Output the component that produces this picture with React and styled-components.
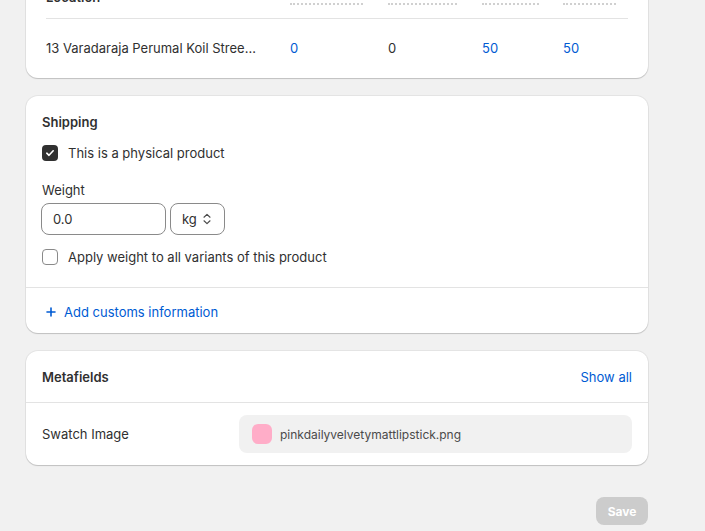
import React from "react";
import styled, { createGlobalStyle } from "styled-components";

const GlobalStyle = createGlobalStyle`
  html, body {
    margin: 0;
    padding: 0;
    background: #f1f1f1;
    font-family: Inter, "Noto Sans", sans-serif;
    font-size: 13px;
    color: #303030;
    overflow: hidden;
  }
`;

const Page = styled.div`
  width: 622px;
  padding-left: 26px;
  display: flex;
  flex-direction: column;
  gap: 18px;
`;

const Card = styled.section`
  background: #fff;
  border-radius: 12px;
  box-shadow: 0 0 0 1px rgba(0, 0, 0, 0.05), 0 1px 1px 0 rgba(0, 0, 0, 0.16);
  overflow: hidden;
`;

const InventoryCard = styled(Card)`
  margin-top: -32px;
  padding: 20px 20px 20px;
`;

const TableRow = styled.div`
  display: grid;
  grid-template-columns: 244px 98px 94px 81px 1fr;
  align-items: end;
  line-height: 20px;
  ${(p) =>
    p.$head
      ? `padding-bottom: 13px; border-bottom: 1px solid #e3e3e3; line-height: 15px;`
      : `padding-top: 19px;`}
`;

const HeadLabel = styled.span`
  justify-self: start;
  font-weight: 600;
  color: #303030;
  border-bottom: ${(p) => (p.$plain ? "none" : "2px dotted #d0d0d0")};
`;

const LocationText = styled.span`
  display: block;
  width: 214px;
  white-space: nowrap;
  overflow: hidden;
  text-overflow: ellipsis;
`;

const Qty = styled.span`
  color: ${(p) => (p.$link ? "#005bd3" : "#303030")};
`;

const Section = styled.div`
  padding: ${(p) => p.$pad || "16px"};
  border-top: ${(p) => (p.$divided ? "1px solid #e3e3e3" : "none")};
`;

const Title = styled.h2`
  margin: 0;
  font-size: 13px;
  line-height: 20px;
  font-weight: 600;
  color: #303030;
`;

const CheckRow = styled.label`
  display: flex;
  align-items: center;
  gap: 10px;
  line-height: 20px;
  margin-top: ${(p) => p.$mt || "0"};
`;

const Box = styled.span`
  width: 16px;
  height: 16px;
  box-sizing: border-box;
  border-radius: 4px;
  display: flex;
  align-items: center;
  justify-content: center;
  background: ${(p) => (p.$checked ? "#303030" : "#fff")};
  border: ${(p) => (p.$checked ? "none" : "1px solid #8a8a8a")};
`;

const FieldLabel = styled.div`
  margin-top: 17px;
  line-height: 20px;
`;

const FieldRow = styled.div`
  display: flex;
  gap: 4px;
  margin-top: 3px;
  margin-left: -1px;
`;

const Input = styled.div`
  box-sizing: border-box;
  height: 32px;
  width: ${(p) => p.$w};
  border: 1px solid #8a8a8a;
  border-radius: 8px;
  padding: 0 11px;
  display: flex;
  align-items: center;
  gap: 4px;
  color: #303030;
`;

const LinkButton = styled.div`
  display: flex;
  align-items: center;
  gap: 4px;
  color: #005bd3;
  line-height: 20px;
`;

const HeaderRow = styled.div`
  display: flex;
  justify-content: space-between;
  align-items: center;
  line-height: 20px;
`;

const Link = styled.span`
  color: #005bd3;
`;

const MetaRow = styled.div`
  display: grid;
  grid-template-columns: 197px 1fr;
  align-items: center;
`;

const FileBox = styled.div`
  height: 38px;
  border-radius: 8px;
  background: #f1f1f1;
  display: flex;
  align-items: center;
  gap: 8px;
  padding: 0 13px;
  font-size: 12px;
  color: #4a4a4a;
`;

const Swatch = styled.span`
  width: 20px;
  height: 20px;
  border-radius: 6px;
  background: #ffadc8;
`;

const Footer = styled.div`
  width: 648px;
  display: flex;
  justify-content: flex-end;
  margin-top: 32px;
`;

const SaveButton = styled.button`
  width: 52px;
  height: 28px;
  border: none;
  border-radius: 8px;
  background: #cccccc;
  color: #fff;
  font-family: inherit;
  font-size: 12px;
  font-weight: 650;
`;

const Check = () => (
  <svg width="10" height="10" viewBox="0 0 10 10" fill="none">
    <path d="M1.8 5.2 4 7.3 8.2 2.8" stroke="#fff" strokeWidth="1.6" strokeLinecap="round" strokeLinejoin="round" />
  </svg>
);

const Chevrons = () => (
  <svg width="12" height="14" viewBox="0 0 12 14" fill="none">
    <path d="M3 5.2 6 2.4 9 5.2M3 8.8 6 11.6 9 8.8" stroke="#4a4a4a" strokeWidth="1.2" strokeLinecap="round" strokeLinejoin="round" />
  </svg>
);

const Plus = () => (
  <svg width="18" height="18" viewBox="0 0 18 18" fill="none">
    <path d="M9 5v8M5 9h8" stroke="#005bd3" strokeWidth="1.6" strokeLinecap="round" />
  </svg>
);

const App = () => (
  <>
    <GlobalStyle />
    <Page>
      <InventoryCard>
        <TableRow $head>
          <HeadLabel $plain>Location</HeadLabel>
          <HeadLabel>Unavailable</HeadLabel>
          <HeadLabel>Committed</HeadLabel>
          <HeadLabel>Available</HeadLabel>
          <HeadLabel>On hand</HeadLabel>
        </TableRow>
        <TableRow>
          <LocationText>13 Varadaraja Perumal Koil Street, Chennai</LocationText>
          <Qty $link>0</Qty>
          <Qty>0</Qty>
          <Qty $link>50</Qty>
          <Qty $link>50</Qty>
        </TableRow>
      </InventoryCard>

      <Card>
        <Section $pad="16px 16px 20px">
          <Title>Shipping</Title>
          <CheckRow $mt="11px">
            <Box $checked>
              <Check />
            </Box>
            This is a physical product
          </CheckRow>
          <FieldLabel>Weight</FieldLabel>
          <FieldRow>
            <Input $w="125px">0.0</Input>
            <Input $w="55px">
              kg <Chevrons />
            </Input>
          </FieldRow>
          <CheckRow $mt="12px">
            <Box />
            Apply weight to all variants of this product
          </CheckRow>
        </Section>
        <Section $divided $pad="14px 16px 11px">
          <LinkButton>
            <Plus />
            Add customs information
          </LinkButton>
        </Section>
      </Card>

      <Card>
        <Section $pad="16px 16px 15px">
          <HeaderRow>
            <Title>Metafields</Title>
            <Link>Show all</Link>
          </HeaderRow>
        </Section>
        <Section $divided $pad="12px 16px">
          <MetaRow>
            <span>Swatch Image</span>
            <FileBox>
              <Swatch />
              pinkdailyvelvetymattlipstick.png
            </FileBox>
          </MetaRow>
        </Section>
      </Card>
    </Page>
    <Footer>
      <SaveButton>Save</SaveButton>
    </Footer>
  </>
);

export default App;
